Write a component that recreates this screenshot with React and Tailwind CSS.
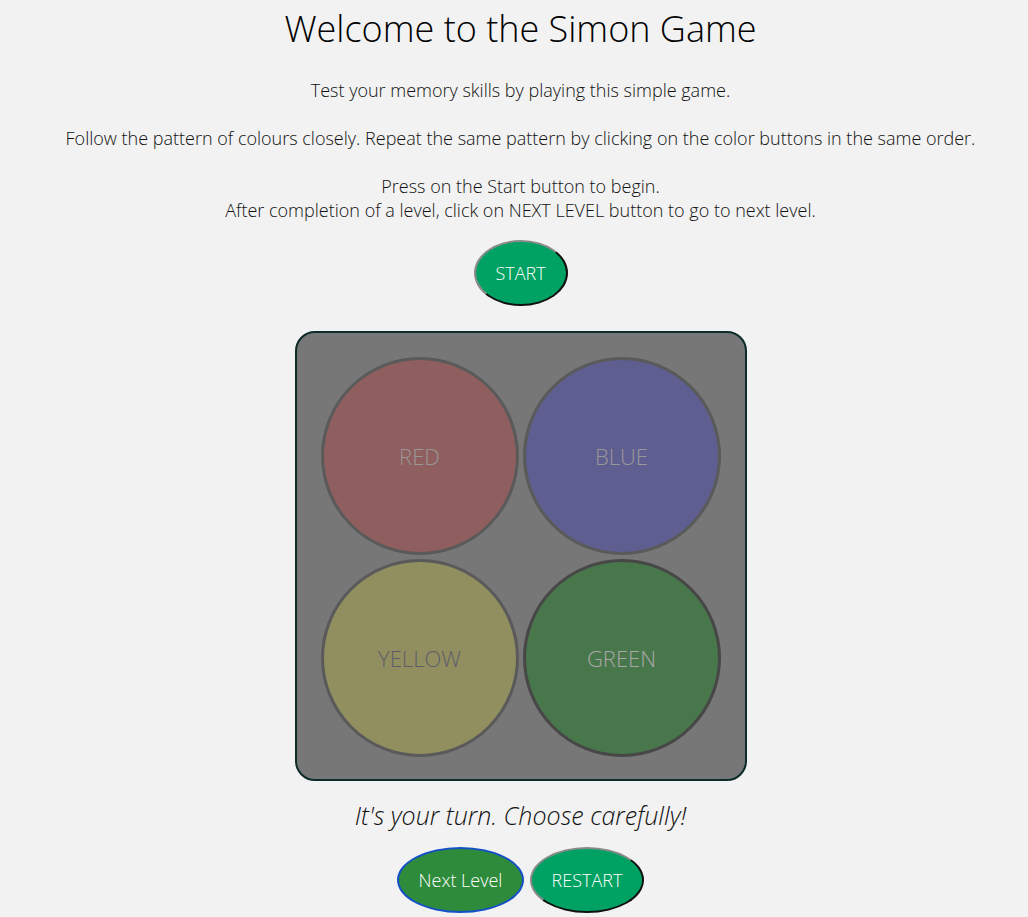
import React from 'react';

const pads = [
  { label: 'RED', bg: 'bg-[#8f5e5e]', border: 'border-[#5a5a5a]', text: 'text-[#989898]' },
  { label: 'BLUE', bg: 'bg-[#5f5e90]', border: 'border-[#5a5a5a]', text: 'text-[#989898]' },
  { label: 'YELLOW', bg: 'bg-[#918f5f]', border: 'border-[#5a5a5a]', text: 'text-[#5e5e6a]' },
  { label: 'GREEN', bg: 'bg-[#48774c]', border: 'border-[#474747]', text: 'text-[#a8a8a8]' },
];

const outset = 'border-2 border-t-[#8a8a8a] border-l-[#8a8a8a] border-b-[#111] border-r-[#111]';

export default function App() {
  return (
    <div className="min-h-screen bg-[#f2f2f2] pl-[13px] text-center text-[#111] font-['Open_Sans',sans-serif] font-light">
      <h1 className="pt-[4px] text-[36px] leading-[49px] font-light text-black">Welcome to the Simon Game</h1>

      <p className="mt-[25px] text-[18px] leading-[24px]">Test your memory skills by playing this simple game.</p>
      <p className="mt-[24px] text-[18px] leading-[24px]">
        Follow the pattern of colours closely. Repeat the same pattern by clicking on the color buttons in the same order.
      </p>
      <p className="mt-[24px] text-[18px] leading-[24px]">
        Press on the Start button to begin.
        <br />
        After completion of a level, click on NEXT LEVEL button to go to next level.
      </p>

      <div className="mt-[18px] flex justify-center">
        <button className={`w-[94px] h-[66px] rounded-[50%] bg-[#00a263] text-white text-[18px] font-light ${outset}`}>
          START
        </button>
      </div>

      <div className="mt-[25px] flex justify-center">
        <div className="grid grid-cols-2 gap-[4px] pt-[24px] pb-[22px] px-[24px] bg-[#777777] border-2 border-[#0d2b27] rounded-[20px]">
          {pads.map((p) => (
            <div
              key={p.label}
              className={`w-[198px] h-[198px] rounded-full border-[3px] flex items-center justify-center text-[22px] font-light ${p.bg} ${p.border} ${p.text}`}
            >
              {p.label}
            </div>
          ))}
        </div>
      </div>

      <p className="mt-[18px] text-[25px] leading-[33px] italic">It's your turn. Choose carefully!</p>

      <div className="mt-[15px] flex justify-center gap-[6px]">
        <button className="w-[127px] h-[66px] rounded-[50%] bg-[#2e8b3b] text-white text-[18px] font-light border-2 border-[#1450c8]">
          Next Level
        </button>
        <button className={`w-[114px] h-[66px] rounded-[50%] bg-[#00a263] text-white text-[18px] font-light ${outset}`}>
          RESTART
        </button>
      </div>
    </div>
  );
}
